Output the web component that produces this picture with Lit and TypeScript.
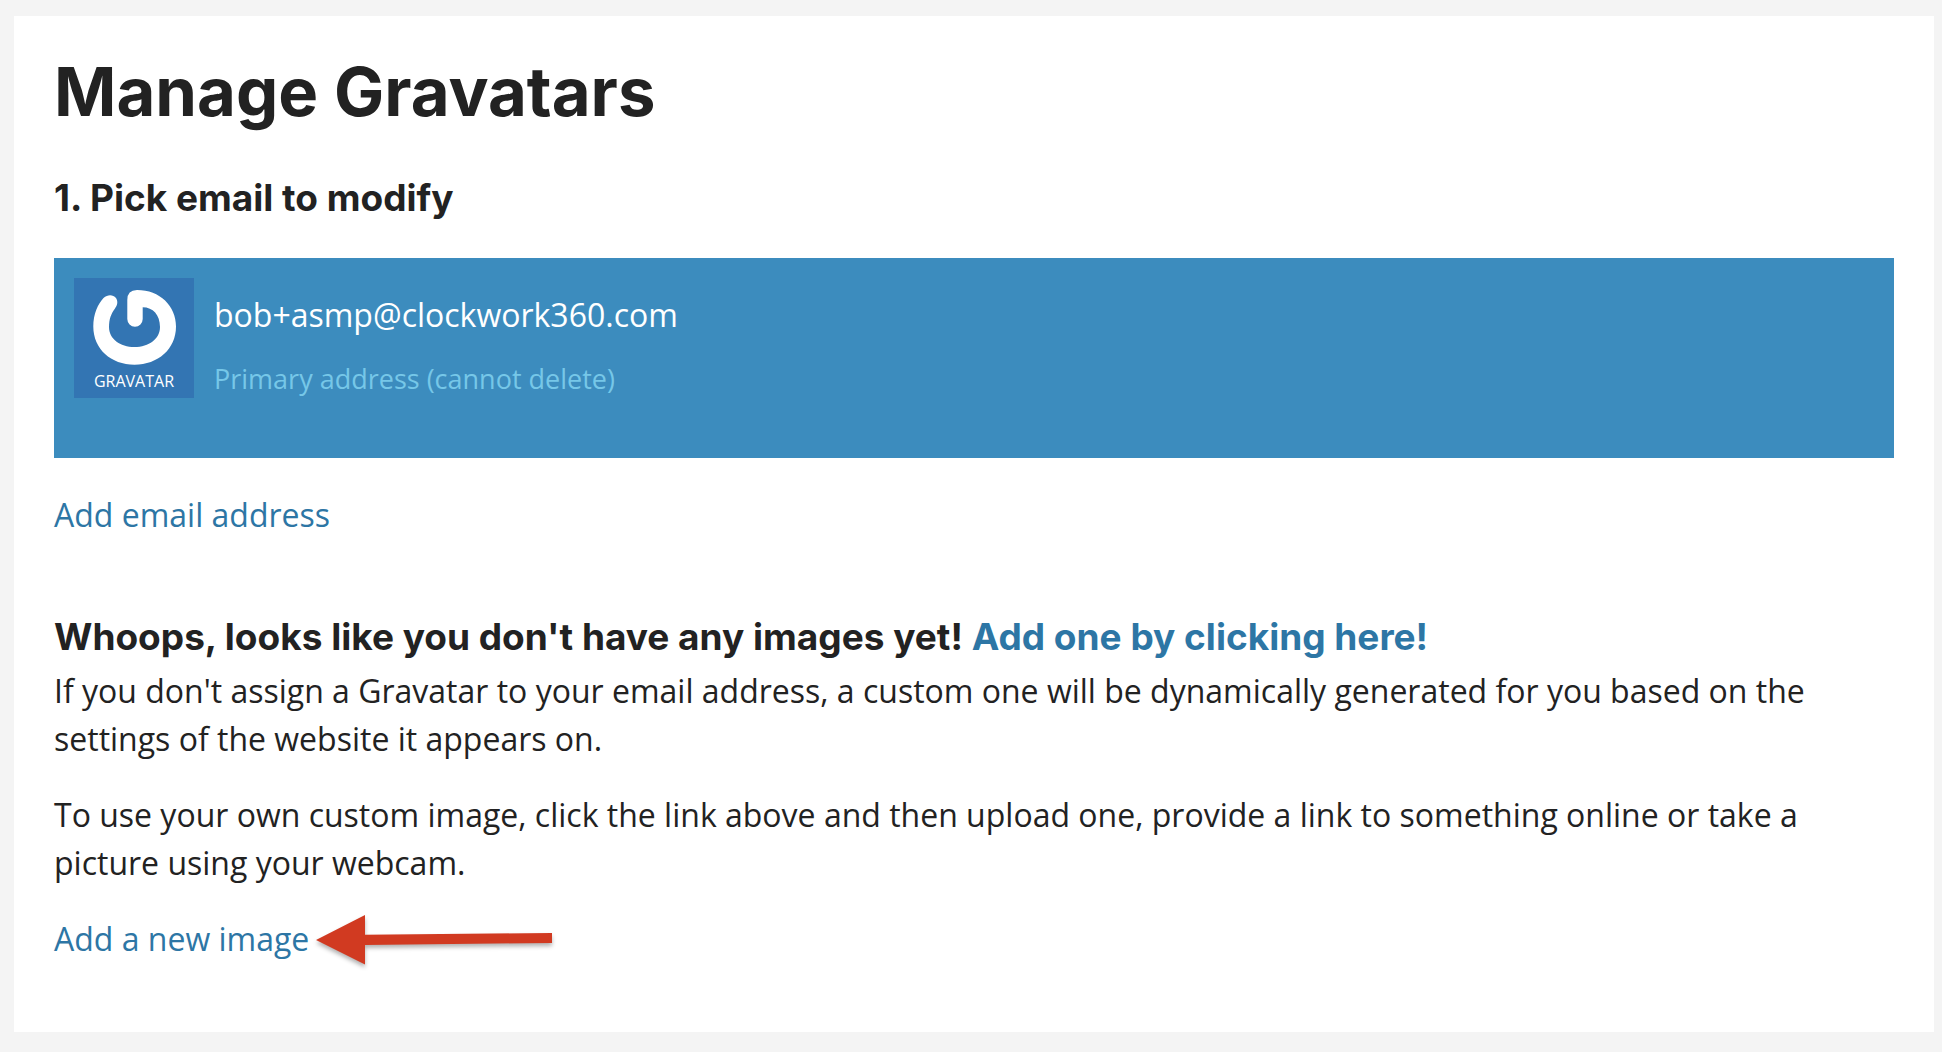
import { LitElement, html, css } from "lit";
import { customElement } from "lit/decorators.js";

@customElement("gravatar-badge")
class GravatarBadge extends LitElement {
  static styles = css`
    :host {
      display: block;
      flex: none;
      width: 120px;
      height: 120px;
    }
    .badge {
      display: block;
      width: 100%;
      height: 100%;
    }
    .tile {
      fill: #3375b3;
    }
    .mark {
      fill: #fff;
    }
    .name {
      fill: #fff;
      font-family: "Open Sans", "Liberation Sans", sans-serif;
      font-size: 16px;
      font-weight: 400;
      text-anchor: middle;
    }
  `;

  render() {
    return html`
      <svg class="badge" viewBox="0 0 120 120" role="img" aria-label="Gravatar">
        <rect class="tile" width="120" height="120" />
        <path
          class="mark"
          d="M53.3 22Q53.3 12 63 12C86 12 102 28 102 48.5C102 71 84 86.7 60.5 86.7C37 86.7 19.3 71 19.3 48.5C19.3 36 24 26 29.5 20C34 16 39 16.5 42 20C44.5 24 43 27.5 41 30.5C37 36 35 41 35 49C35 61 46 69 60.5 69C75 69 86 61 86 49C86 37 79 29.3 68.7 29.3V41A7.7 7.7 0 0 1 53.3 41Z"
        />
        <text class="name" x="60" y="109">GRAVATAR</text>
      </svg>
    `;
  }
}

@customElement("app-root")
class AppRoot extends LitElement {
  static styles = css`
    :host {
      display: block;
      box-sizing: border-box;
      min-height: 100vh;
      padding: 16px 8px 20px 14px;
      background: #f4f4f4;
      color: #222;
      font-family: "Open Sans", "Noto Sans", sans-serif;
      font-size: 32px;
      line-height: 48px;
    }
    .card {
      box-sizing: border-box;
      padding: 40px 40px 69px;
      background: #fff;
    }
    .title,
    .heading {
      margin: 0;
      font-family: Inter, "Open Sans", sans-serif;
      font-weight: 700;
    }
    .title {
      font-size: 67px;
      line-height: 72px;
    }
    .heading {
      font-size: 37px;
      line-height: 48px;
    }
    .step {
      margin-top: 46px;
    }
    .account {
      display: flex;
      gap: 20px;
      box-sizing: border-box;
      min-height: 200px;
      margin-top: 36px;
      padding: 20px;
      background: #3c8cbe;
    }
    .details {
      display: flex;
      flex-direction: column;
      gap: 16px;
      padding-top: 13px;
    }
    .email {
      color: #fff;
    }
    .note {
      color: #76c7e8;
      font-size: 27px;
    }
    .link {
      color: #2d76a5;
      text-decoration: none;
    }
    .add {
      margin: 33px 0 0;
    }
    .empty {
      margin-top: 74px;
    }
    .text {
      margin: 0 0 28px;
    }
    .lead {
      margin-top: 6px;
    }
    .upload {
      display: flex;
      align-items: center;
      gap: 7px;
      margin: 0;
    }
    .arrow {
      flex: none;
      width: 240px;
      height: 56px;
      margin: -4px 0;
      overflow: visible;
      filter: drop-shadow(0 3px 2px rgba(0, 0, 0, 0.3));
    }
    .arrow-shape {
      fill: #d13a21;
    }
  `;

  render() {
    return html`
      <main class="card">
        <h1 class="title">Manage Gravatars</h1>
        <h2 class="heading step">1. Pick email to modify</h2>
        <section class="account">
          <gravatar-badge></gravatar-badge>
          <div class="details">
            <span class="email">bob+asmp@clockwork360.com</span>
            <span class="note">Primary address (cannot delete)</span>
          </div>
        </section>
        <p class="add"><a class="link" href="#add-email">Add email address</a></p>
        <h2 class="heading empty">
          Whoops, looks like you don't have any images yet!
          <a class="link" href="#add-image">Add one by clicking here!</a>
        </h2>
        <p class="text lead">
          If you don't assign a Gravatar to your email address, a custom one will be dynamically
          generated for you based on the settings of the website it appears on.
        </p>
        <p class="text">
          To use your own custom image, click the link above and then upload one, provide a link to
          something online or take a picture using your webcam.
        </p>
        <p class="upload">
          <a class="link" href="#new-image">Add a new image</a>
          <svg class="arrow" viewBox="0 0 240 56" aria-hidden="true">
            <path class="arrow-shape" d="M0 29L49 4V23.7L236 22V32L49 34V53.5Z" />
          </svg>
        </p>
      </main>
    `;
  }
}
